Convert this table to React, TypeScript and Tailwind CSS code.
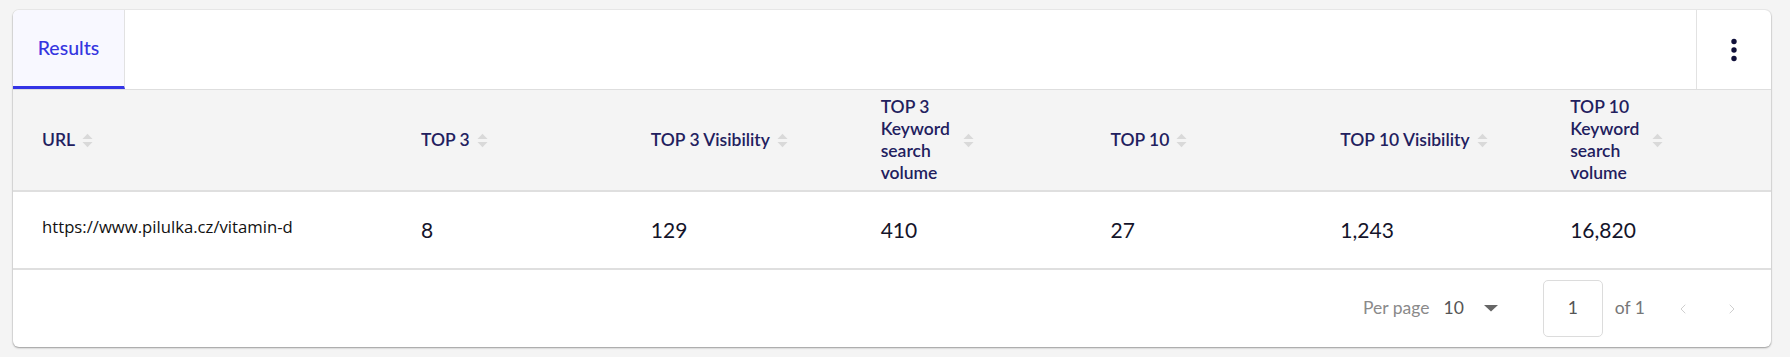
import { ChevronLeft, ChevronRight } from "lucide-react";

const columns = [
  { label: "URL", wrap: false },
  { label: "TOP 3", wrap: false },
  { label: "TOP 3 Visibility", wrap: false },
  { label: "TOP 3 Keyword search volume", wrap: true },
  { label: "TOP 10", wrap: false },
  { label: "TOP 10 Visibility", wrap: false },
  { label: "TOP 10 Keyword search volume", wrap: true },
];

const rows = [
  {
    url: "https://www.pilulka.cz/vitamin-d",
    values: ["8", "129", "410", "27", "1,243", "16,820"],
  },
];

function SortIcon() {
  return (
    <svg width="11" height="15" viewBox="0 0 11 15" className="shrink-0">
      <path d="M0.5 6 L5.5 0.8 L10.5 6 Z" fill="#d9d9d9" />
      <path d="M0.5 9 L5.5 14.2 L10.5 9 Z" fill="#d9d9d9" />
    </svg>
  );
}

export default function App() {
  return (
    <div className="min-h-screen bg-[#f4f4f4] pl-[13px] pr-[19px] pt-[10px] font-[Lato,sans-serif]">
      <div className="bg-white rounded-md shadow-[0_1px_2px_rgba(0,0,0,0.35),0_0_0_1px_rgba(0,0,0,0.04)] overflow-hidden">
        {/* Tabs */}
        <div className="flex h-[80px] border-b border-[#dedede]">
          <div className="w-[112px] flex items-center justify-center bg-[#f8f8ff] border-r border-[#e2e2e2] border-b-[3px] border-b-[#3434e6] text-[#3535e0] text-[19.5px] font-medium">
            Results
          </div>
          <div className="flex-1" />
          <div className="w-[75px] h-[79px] flex items-center justify-center border-l border-[#e2e2e2]">
            <svg width="8" height="24" viewBox="0 0 8 24">
              <circle cx="4" cy="3.5" r="2.7" fill="#10103a" />
              <circle cx="4" cy="12" r="2.7" fill="#10103a" />
              <circle cx="4" cy="20.5" r="2.7" fill="#10103a" />
            </svg>
          </div>
        </div>

        {/* Header */}
        <div className="grid grid-cols-[379px_repeat(6,1fr)] h-[102px] bg-[#f4f4f4] border-b-2 border-[#dfdfdf]">
          {columns.map((col) => (
            <div key={col.label} className="flex items-center gap-[7px] pl-[29px]">
              <span
                className={
                  col.wrap
                    ? "max-w-[75px] text-[17.5px] leading-[22px] font-semibold text-[#22205e]"
                    : "text-[17.5px] leading-[22px] font-semibold text-[#22205e] whitespace-nowrap"
                }
              >
                {col.label}
              </span>
              <SortIcon />
            </div>
          ))}
        </div>

        {/* Rows */}
        {rows.map((row) => (
          <div
            key={row.url}
            className="grid grid-cols-[379px_repeat(6,1fr)] h-[78px] border-b-2 border-[#dfdfdf]"
          >
            <div className="flex items-center pl-[29px] pb-[6px] font-['Open_Sans',sans-serif] text-[16.7px] text-[#111]">
              {row.url}
            </div>
            {row.values.map((v, i) => (
              <div key={i} className="flex items-center pl-[29px] text-[21px] text-[#14142a]">
                {v}
              </div>
            ))}
          </div>
        ))}

        {/* Footer / pagination */}
        <div className="flex items-center justify-end h-[77px] pr-[31px]">
          <span className="text-[17.5px] text-[#8a8a8a]">Per page</span>
          <span className="ml-[14px] text-[17.5px] text-[#555]">10</span>
          <svg width="14" height="7" viewBox="0 0 14 7" className="ml-[20px]">
            <path d="M0 0 L14 0 L7 6.5 Z" fill="#666" />
          </svg>
          <div className="ml-[45px] w-[60px] h-[57px] rounded-[5px] border border-[#dcdcdc] flex items-center justify-center text-[17.5px] text-[#555]">
            1
          </div>
          <span className="ml-[12px] text-[17.5px] text-[#777]">of 1</span>
          <ChevronLeft size={16} strokeWidth={1.5} className="ml-[30px] text-[#cfcfcf]" />
          <ChevronRight size={16} strokeWidth={1.5} className="ml-[33px] text-[#cfcfcf]" />
        </div>
      </div>
    </div>
  );
}
